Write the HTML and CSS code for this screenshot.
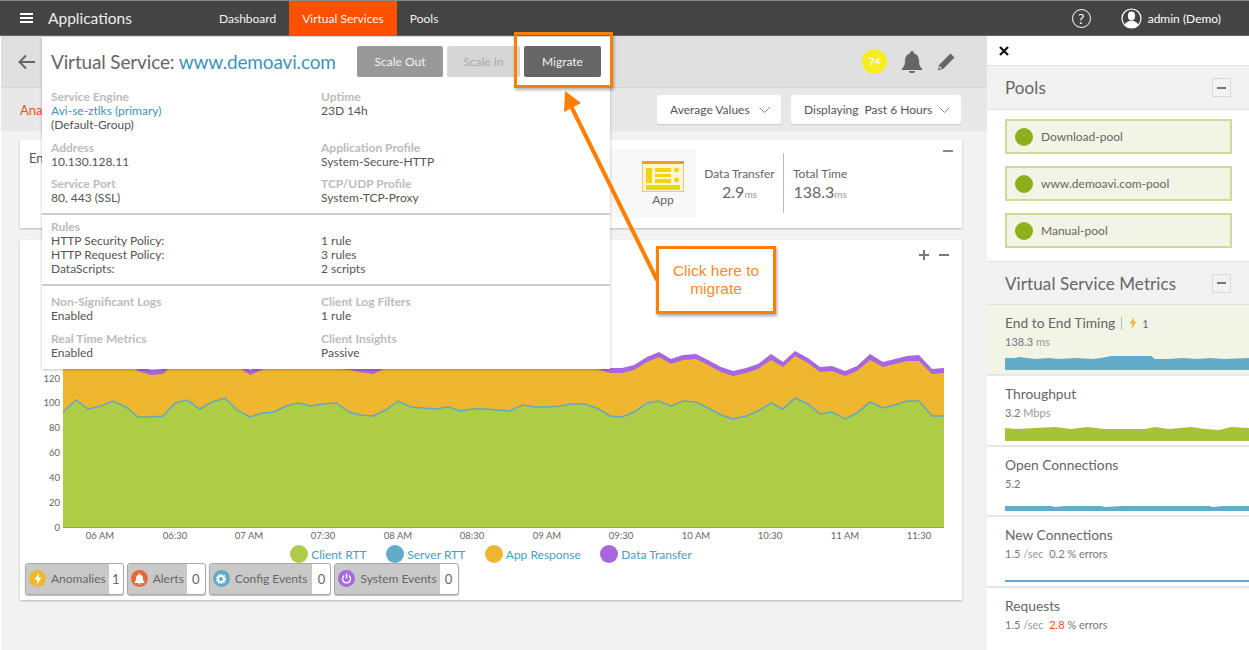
FILE: index.html
```html
<!DOCTYPE html>
<html lang="en">
<head>
    <meta charset="UTF-8">
    <title>Applications</title>
    <link rel="stylesheet" href="styles.css">
</head>
<body>
    <nav class="topbar">
        <div class="burger"><span></span><span></span><span></span></div>
        <div class="brand">Applications</div>
        <div class="tabs">
            <a class="tab">Dashboard</a>
            <a class="tab tab-active">Virtual Services</a>
            <a class="tab">Pools</a>
        </div>
        <div class="account">
            <span class="help">?</span>
            <svg class="user-icon" width="21" height="21" viewBox="0 0 21 21">
                <circle cx="10.5" cy="10.5" r="9.5" fill="none" stroke="#fff" stroke-width="1.2"/>
                <ellipse cx="10.5" cy="8" rx="3.6" ry="4.4" fill="#fff"/>
                <path d="M3.6 17c1-3 4-3.4 5-4.2h3.8c1 .8 4 1.200 5 4.200a9.500 9.500 0 0 1-13.800 0z" fill="#fff"/>
            </svg>
            <span class="user-name">admin (Demo)</span>
        </div>
    </nav>

    <div class="workspace">
        <main class="main">
            <header class="page-head">
                <svg class="back" width="18" height="16" viewBox="0 0 18 16">
                    <path d="M17 8H2M8 1.500 1.500 8 8 14.500" fill="none" stroke="#666" stroke-width="2"/>
                </svg>
                <div class="head-icons">
                    <span class="score">74</span>
                    <svg width="22" height="22" viewBox="0 0 22 22">
                        <path d="M11 0a2 2 0 0 1 2 2v.600c3.500 1 5 3.900 5 7.400 0 4 1.200 6 3 7.500v1.500H1v-1.500c1.800-1.500 3-3.500 3-7.500 0-3.500 1.500-6.400 5-7.400V2a2 2 0 0 1 2-2zM8 20h6a3 2.200 0 0 1-6 0z" fill="#666"/>
                    </svg>
                    <svg width="18" height="18" viewBox="0 0 18 18">
                        <path d="M13.500.500 17.500 4.500 6 16 .8 17.200 2 12zM2.700 13l-.8 3.100 3.100-.8z" fill="#666"/>
                    </svg>
                </div>
            </header>
            <div class="subnav">
                <span class="subnav-link">Ana</span>
                <div class="selects">
                    <div class="select select-avg">Average Values
                        <svg width="11" height="6" viewBox="0 0 11 6"><path d="M.5.500 5.500 5.500 10.500.500" fill="none" stroke="#888"/></svg>
                    </div>
                    <div class="select select-time">Displaying&nbsp; Past 6 Hours
                        <svg width="11" height="6" viewBox="0 0 11 6"><path d="M.5.500 5.500 5.500 10.500.500" fill="none" stroke="#888"/></svg>
                    </div>
                </div>
            </div>

            <div class="content">
                <section class="card summary">
                    <div class="summary-title">En</div>
                    <div class="app-tile">
                        <svg width="42" height="31" viewBox="0 0 42 31">
                            <rect x=".5" y=".5" width="41" height="30" fill="#fdf6dc" stroke="#f8c27a"/>
                            <rect width="42" height="3" fill="#f59a23"/>
                            <rect x="4" y="7" width="6" height="15" fill="#f4d40f"/>
                            <rect x="13" y="7" width="16" height="4" fill="#f4d40f"/>
                            <rect x="13" y="13" width="16" height="3" fill="#f4d40f"/>
                            <rect x="13" y="18" width="16" height="4" fill="#f4d40f"/>
                            <circle cx="34.500" cy="9" r="2.500" fill="#f4d40f"/>
                            <circle cx="34.500" cy="19" r="2.500" fill="#f4d40f"/>
                            <rect x="4" y="24" width="34" height="5" fill="#f4d40f"/>
                        </svg>
                        <span>App</span>
                    </div>
                    <div class="stat stat-transfer">
                        <span class="stat-label">Data Transfer</span>
                        <span class="stat-value">2.9<small>ms</small></span>
                    </div>
                    <div class="stat stat-total">
                        <span class="stat-label">Total Time</span>
                        <span class="stat-value">138.3<small>ms</small></span>
                    </div>
                    <span class="summary-minus"></span>
                </section>

                <section class="card chart-card">
                    <div class="chart-tools"><span class="tool-plus"></span><span class="tool-minus"></span></div>
                    <!-- page coordinates, so the numbers read off the screen directly -->
                    <svg class="chart" width="942" height="275" viewBox="20 270 942 275">
                        <polygon fill="#a866e0" points="63,355 126,355 138,366 151,370 163,369 175,357 237,361 250,370 262,365 274,357 349,365 360,367 373,369 386,363 398,357 597,364 610,368 622,368 634,365 647,357 659,352 671,359 683,355 696,354 708,360 721,367 733,371 746,368 758,364 771,354 783,362 795,351 808,358 820,367 832,366 845,371 857,366 870,354 883,362 895,359 907,356 919,355 932,369 944,368 944,527 63,527"/>
                        <polygon fill="#efb72f" points="63,360 126,360 138,371 151,375 163,374 175,362 237,366 250,375 262,370 274,362 349,370 360,372 373,374 386,368 398,362 597,369 610,373 622,373 634,370 647,362 659,357 671,364 683,360 696,359 708,365 721,372 733,376 746,373 758,369 771,360 783,367 795,356 808,363 820,372 832,371 845,376 857,371 870,360 883,367 895,364 907,361 919,361 932,374 944,373 944,527 63,527"/>
                        <polygon fill="#aecc45" points="63,412 76,400 88,409 101,406 113,401 126,407 138,417 151,417 163,416 175,403 187,400 200,409 212,402 225,398 237,410 250,417 262,413 274,412 286,406 298,403 311,406 323,404 336,403 349,412 360,415 373,416 386,410 398,401 411,407 423,408 435,409 448,407 460,411 472,409 485,409 497,410 510,411 522,405 535,407 547,407 560,406 572,404 584,404 597,408 610,416 622,417 634,412 647,403 659,401 671,406 683,401 696,402 708,408 721,415 733,419 746,416 758,411 771,403 783,409 795,398 808,404 820,414 832,412 845,419 857,413 870,402 883,408 895,405 907,401 919,401 932,416 944,416 944,527 63,527"/>
                        <polyline fill="none" stroke="#5fa9c4" stroke-width="1.500" points="63,412 76,400 88,409 101,406 113,401 126,407 138,417 151,417 163,416 175,403 187,400 200,409 212,402 225,398 237,410 250,417 262,413 274,412 286,406 298,403 311,406 323,404 336,403 349,412 360,415 373,416 386,410 398,401 411,407 423,408 435,409 448,407 460,411 472,409 485,409 497,410 510,411 522,405 535,407 547,407 560,406 572,404 584,404 597,408 610,416 622,417 634,412 647,403 659,401 671,406 683,401 696,402 708,408 721,415 733,419 746,416 758,411 771,403 783,409 795,398 808,404 820,414 832,412 845,419 857,413 870,402 883,408 895,405 907,401 919,401 932,416 944,416"/>
                        <path d="M63 527.500H944" stroke="#8fa83a" fill="none"/>
                        <g class="axis-y">
                            <text x="60" y="382">120</text><text x="60" y="406">100</text><text x="60" y="431">80</text><text x="60" y="456">60</text><text x="60" y="481">40</text><text x="60" y="506">20</text><text x="60" y="531">0</text>
                        </g>
                        <g class="axis-x">
                            <text x="100" y="539">06 AM</text><text x="175" y="539">06:30</text><text x="249" y="539">07 AM</text><text x="323" y="539">07:30</text><text x="398" y="539">08 AM</text><text x="472" y="539">08:30</text><text x="547" y="539">09 AM</text><text x="621" y="539">09:30</text><text x="696" y="539">10 AM</text><text x="770" y="539">10:30</text><text x="845" y="539">11 AM</text><text x="919" y="539">11:30</text>
                        </g>
                    </svg>
                    <div class="legend">
                        <span class="legend-item"><i class="dot dot-green"></i>Client RTT</span>
                        <span class="legend-item"><i class="dot dot-blue"></i>Server RTT</span>
                        <span class="legend-item"><i class="dot dot-orange"></i>App Response</span>
                        <span class="legend-item"><i class="dot dot-purple"></i>Data Transfer</span>
                    </div>
                    <div class="events">
                        <div class="event">
                            <div class="event-name"><i class="event-icon dot-orange"><svg width="8" height="12" viewBox="0 0 8 12"><path d="M5 0 .5 6.500h3L2.500 12 7.500 4.500h-3z" fill="#fff"/></svg></i>Anomalies</div>
                            <div class="event-count event-count-narrow">1</div>
                        </div>
                        <div class="event">
                            <div class="event-name"><i class="event-icon dot-red"><svg width="11" height="12" viewBox="0 0 22 22"><path d="M11 0a2 2 0 0 1 2 2v.600c3.500 1 5 3.900 5 7.400 0 4 1.200 6 3 7.500v1.500H1v-1.500c1.800-1.500 3-3.500 3-7.500 0-3.500 1.500-6.400 5-7.400V2a2 2 0 0 1 2-2zM8 20h6a3 2.200 0 0 1-6 0z" fill="#fff"/></svg></i>Alerts</div>
                            <div class="event-count">0</div>
                        </div>
                        <div class="event">
                            <div class="event-name event-name-wide"><i class="event-icon dot-blue"><svg width="10" height="10" viewBox="0 0 10 10"><circle cx="5" cy="5" r="3" fill="none" stroke="#fff" stroke-width="2"/><circle cx="5" cy="5" r="4.600" fill="none" stroke="#fff" stroke-width="1.200" stroke-dasharray="1.500 1.500"/></svg></i>Config Events</div>
                            <div class="event-count">0</div>
                        </div>
                        <div class="event">
                            <div class="event-name"><i class="event-icon dot-purple"><svg width="11" height="11" viewBox="0 0 11 11"><path d="M3.300 2.500a4 4 0 1 0 4.400 0M5.500.5v5" fill="none" stroke="#fff" stroke-width="1.400"/></svg></i>System Events</div>
                            <div class="event-count">0</div>
                        </div>
                    </div>
                </section>
            </div>
        </main>

        <aside class="sidebar">
            <div class="sidebar-close">
                <svg width="10" height="10" viewBox="0 0 10 10"><path d="M1 1 9 9M9 1 1 9" stroke="#111" stroke-width="2.200"/></svg>
            </div>
            <div class="panel-head">
                <h3>Pools</h3>
                <span class="collapse"></span>
            </div>
            <div class="pools">
                <div class="pool"><i class="pool-dot"></i>Download-pool</div>
                <div class="pool"><i class="pool-dot"></i>www.demoavi.com-pool</div>
                <div class="pool"><i class="pool-dot"></i>Manual-pool</div>
            </div>
            <div class="panel-head panel-metrics">
                <h3>Virtual Service Metrics</h3>
                <span class="collapse"></span>
            </div>
            <div class="metric metric-active">
                <div class="metric-name">End to End Timing <span class="metric-flag"><svg width="8" height="12" viewBox="0 0 8 12"><path d="M5 0 .5 6.500h3L2.500 12 7.500 4.500h-3z" fill="#efb72f"/></svg> 1</span></div>
                <div class="metric-value">138.3 <span class="unit">ms</span></div>
                <svg class="spark" viewBox="0 0 244 15" preserveAspectRatio="none">
                    <polygon fill="#62abc9" points="0,3 10,3 14,2 22,3 30,4 44,3 54,4 70,3 88,4 96,3 106,1 136,1 146,1 150,4 162,4 178,3 192,4 205,3 220,4 244,3 244,15 0,15"/>
                </svg>
            </div>
            <div class="metric">
                <div class="metric-name">Throughput</div>
                <div class="metric-value">3.2 <span class="unit">Mbps</span></div>
                <svg class="spark" viewBox="0 0 244 15" preserveAspectRatio="none">
                    <polygon fill="#a4c339" points="0,2 12,3 30,2 50,1 66,3 82,1 100,3 126,3 140,3 150,1 164,3 186,1 200,3 214,4 226,1 244,2 244,15 0,15"/>
                </svg>
            </div>
            <div class="metric">
                <div class="metric-name">Open Connections</div>
                <div class="metric-value">5.2</div>
                <svg class="spark" viewBox="0 0 244 15" preserveAspectRatio="none">
                    <polygon fill="#62abc9" points="0,10 46,10 50,11 60,10 96,10 100,11 118,10 204,10 208,11 218,10 244,10 244,15 0,15"/>
                </svg>
            </div>
            <div class="metric">
                <div class="metric-name">New Connections</div>
                <div class="metric-value">1.5 <span class="unit">/sec</span> &nbsp;0.2 % errors</div>
                <svg class="spark" viewBox="0 0 244 15" preserveAspectRatio="none">
                    <rect y="13" width="244" height="2" fill="#62abc9"/>
                </svg>
            </div>
            <div class="metric">
                <div class="metric-name">Requests</div>
                <div class="metric-value">1.5 <span class="unit">/sec</span> &nbsp;<span class="error">2.8</span> % errors</div>
            </div>
        </aside>
    </div>

    <!-- popover opened from the page title -->
    <div class="popover">
        <div class="popover-head">
            <div class="popover-title">Virtual Service: <a>www.demoavi.com</a></div>
            <div class="popover-actions">
                <button class="btn btn-out">Scale Out</button>
                <button class="btn btn-in">Scale In</button>
                <button class="btn btn-migrate">Migrate</button>
            </div>
        </div>
        <div class="popover-section info-grid">
            <div class="info"><b>Service Engine</b><a>Avi-se-ztlks (primary)</a><span>(Default-Group)</span></div>
            <div class="info"><b>Uptime</b><span>23D 14h</span></div>
            <div class="info"><b>Address</b><span>10.130.128.11</span></div>
            <div class="info"><b>Application Profile</b><span>System-Secure-HTTP</span></div>
            <div class="info"><b>Service Port</b><span>80, 443 (SSL)</span></div>
            <div class="info"><b>TCP/UDP Profile</b><span>System-TCP-Proxy</span></div>
        </div>
        <div class="popover-section info-grid">
            <div class="info"><b>Rules</b><span>HTTP Security Policy:</span><span>HTTP Request Policy:</span><span>DataScripts:</span></div>
            <div class="info"><b>&nbsp;</b><span>1 rule</span><span>3 rules</span><span>2 scripts</span></div>
        </div>
        <div class="popover-section info-grid">
            <div class="info"><b>Non-Significant Logs</b><span>Enabled</span></div>
            <div class="info"><b>Client Log Filters</b><span>1 rule</span></div>
            <div class="info"><b>Real Time Metrics</b><span>Enabled</span></div>
            <div class="info"><b>Client Insights</b><span>Passive</span></div>
        </div>
    </div>

    <!-- callout drawn on top of the screenshot -->
    <div class="highlight"></div>
    <svg class="callout-arrow" width="1249" height="650" viewBox="0 0 1249 650">
        <path d="M657 280 570 104" fill="none" stroke="#ff8000" stroke-width="4"/>
        <path d="M565 91 564 112 581 103z" fill="#ff8000"/>
    </svg>
    <div class="callout">Click here to migrate</div>
</body>
</html>
```

FILE: styles.css
```css
* {
    box-sizing: border-box;
}
html, body {
    height: 100%;
}
body {
    margin: 0;
    overflow: hidden;
    font-family: Lato, "Open Sans", sans-serif;
    font-size: 12px;
    color: #555;
    background: #f2f2f2;
}

/* top bar */
.topbar {
    display: flex;
    align-items: center;
    height: 36px;
    background: #444;
    border-top: 1px solid #888;
    border-bottom: 1px solid #666;
    color: #fff;
}
.burger {
    display: flex;
    flex-direction: column;
    gap: 2px;
    width: 13px;
    margin-left: 20px;
}
.burger span {
    height: 2px;
    background: #fff;
}
.brand {
    width: 158px;
    margin-left: 15px;
    font-size: 15.500px;
    color: #eee;
}
.tabs {
    display: flex;
    align-self: stretch;
}
.tab {
    display: flex;
    align-items: center;
    padding: 0 13px;
    font-size: 12px;
    color: #f2f2f2;
}
.tab-active {
    background: #ff5000;
    margin-bottom: -1px;
}
.account {
    display: flex;
    align-items: center;
    margin-left: auto;
    margin-right: 28px;
}
.help {
    width: 19px;
    height: 19px;
    border: 1px solid #fff;
    border-radius: 50%;
    margin-right: 30px;
    text-align: center;
    line-height: 17px;
    font-size: 14px;
}
.user-icon {
    margin-right: 6px;
}
.user-name {
    font-size: 12px;
}

.workspace {
    display: flex;
    height: 614px;
}
.main {
    width: 987px;
    border-left: 1px solid #fff;
}

/* page header */
.page-head {
    display: flex;
    align-items: center;
    justify-content: space-between;
    height: 52px;
    padding: 0 32px 0 17px;
    background: #e0e0e0;
    border-bottom: 1px solid #d6d6d6;
}
.head-icons {
    display: flex;
    align-items: center;
    gap: 14px;
}
.score {
    width: 25px;
    height: 25px;
    border-radius: 50%;
    background: #f3ee1c;
    color: #fff;
    font-size: 10px;
    font-weight: 700;
    line-height: 25px;
    text-align: center;
}
.subnav {
    display: flex;
    align-items: center;
    justify-content: space-between;
    height: 43px;
    padding: 0 26px 0 19px;
    background: #e8e8e8;
}
.subnav-link {
    color: #f4511e;
    font-size: 13px;
}
.selects {
    display: flex;
    gap: 10px;
}
.select {
    display: flex;
    align-items: center;
    justify-content: space-between;
    height: 29px;
    padding: 0 11px 0 13px;
    background: #fff;
    border-radius: 2px;
    box-shadow: 0 1px 1px #ccc;
    color: #555;
}
.select-avg {
    width: 124px;
}
.select-time {
    width: 170px;
}

.content {
    padding: 9px 25px 0 19px;
}
.card {
    background: #fff;
    box-shadow: 0 1px 2px rgba(0, 0, 0, 0.25);
}

/* summary card */
.summary {
    position: relative;
    display: flex;
    align-items: flex-start;
    height: 88px;
    margin-bottom: 12px;
}
.summary-title {
    width: 590px;
    padding: 10px 9px;
    font-size: 13px;
}
.app-tile {
    display: flex;
    flex-direction: column;
    align-items: center;
    width: 86px;
    height: 69px;
    margin-top: 9px;
    padding: 12px 0 0 20px;
    background: #f8f8f8;
    color: #666;
}
.stat {
    display: flex;
    flex-direction: column;
    align-items: center;
    margin-top: 13px;
    height: 60px;
    padding-top: 13px;
}
.stat-transfer {
    width: 88px;
    padding-right: 8px;
    padding-left: 8px;
    border-right: 1px solid #bbb;
}
.stat-total {
    padding-left: 9px;
}
.stat-label {
    font-size: 12px;
    color: #666;
}
.stat-value {
    font-size: 16px;
    line-height: 22px;
    color: #666;
}
.stat-value small {
    font-size: 10px;
    color: #999;
}
.summary-minus {
    position: absolute;
    top: 10px;
    right: 9px;
    width: 10px;
    height: 2px;
    background: #888;
}

/* chart card */
.chart-card {
    height: 360px;
}
.chart-tools {
    display: flex;
    align-items: center;
    justify-content: flex-end;
    gap: 10px;
    height: 30px;
    padding-right: 13px;
}
.tool-plus, .tool-minus {
    position: relative;
    width: 10px;
    height: 2px;
    background: #777;
}
.tool-plus::after {
    content: "";
    position: absolute;
    left: 4px;
    top: -4px;
    width: 2px;
    height: 10px;
    background: #777;
}
.chart {
    display: block;
}
.axis-y text, .axis-x text {
    font-family: Lato, sans-serif;
    font-size: 9.500px;
    fill: #666;
}
.axis-y text {
    text-anchor: end;
}
.axis-x text {
    text-anchor: middle;
}
.legend {
    display: flex;
    justify-content: center;
    gap: 19.500px;
    height: 18px;
    color: #4b9cbc;
}
.legend-item {
    display: flex;
    align-items: center;
    gap: 3px;
}
.dot {
    width: 18px;
    height: 18px;
    border-radius: 50%;
}
.dot-green { background: #aecc45; }
.dot-blue { background: #62abc9; }
.dot-orange { background: #efb72f; }
.dot-purple { background: #a866e0; }
.dot-red { background: #e8683a; }

.events {
    display: flex;
    gap: 3px;
    padding-left: 5px;
}
.event {
    display: flex;
    height: 32px;
    border: 1px solid #aaa;
    border-radius: 3px;
    background: #fff;
    box-shadow: 0 1px 1px #bbb;
}
.event-name {
    display: flex;
    align-items: center;
    gap: 5px;
    padding: 0 3px 1px;
    background: #c9c9c9;
    color: #666;
}
.event-name-wide {
    padding-right: 5px;
}
.event-icon {
    display: flex;
    align-items: center;
    justify-content: center;
    width: 17px;
    height: 17px;
    border-radius: 50%;
}
.event-count {
    display: flex;
    align-items: center;
    justify-content: center;
    width: 18px;
    padding-bottom: 1px;
    color: #666;
    font-size: 13px;
}
.event-count-narrow {
    width: 14px;
}

/* right sidebar */
.sidebar {
    width: 262px;
    background: #fff;
}
.sidebar-close {
    display: flex;
    align-items: center;
    height: 29px;
    padding-left: 12px;
}
.panel-head {
    display: flex;
    align-items: center;
    justify-content: space-between;
    height: 45px;
    padding: 0 18px 0 18px;
    background: #f2f2f2;
    border-top: 1px solid #e2e2e2;
    border-bottom: 1px solid #e2e2e2;
}
.panel-head h3 {
    margin: 0;
    font-size: 17px;
    font-weight: 400;
    letter-spacing: 0.1px;
    color: #666;
}
.panel-metrics {
    height: 44px;
}
.collapse {
    display: flex;
    align-items: center;
    justify-content: center;
    width: 19px;
    height: 19px;
    border: 1px solid #d8d8d8;
    background: #f2f2f2;
}
.collapse::before {
    content: "";
    width: 9px;
    height: 2px;
    background: #777;
}
.pools {
    display: flex;
    flex-direction: column;
    gap: 12px;
    padding: 9px 17px 13px 18px;
}
.pool {
    display: flex;
    align-items: center;
    gap: 8px;
    height: 35px;
    padding-left: 8px;
    background: #f2f4e6;
    border: 2px solid #cbdb9a;
    color: #666;
}
.pool-dot {
    width: 18px;
    height: 18px;
    border-radius: 50%;
    background: #8fae1b;
}
.metric {
    position: relative;
    height: 70.750px;
    padding: 9px 0 0 18px;
    border-bottom: 2px solid #e6e6e6;
}
.metric-active {
    background: #f2f4e6;
}
.metric-name {
    display: flex;
    align-items: center;
    gap: 6px;
    font-size: 13.800px;
    line-height: 18px;
    color: #666;
}
.metric-flag {
    display: flex;
    align-items: center;
    gap: 5px;
    padding-left: 7px;
    border-left: 1px solid #bbb;
    font-size: 11px;
    line-height: 13px;
}
.metric-value {
    margin-top: 2px;
    font-size: 11px;
    line-height: 15px;
    color: #777;
}
.unit {
    color: #999;
}
.error {
    color: #e8502a;
}
.spark {
    position: absolute;
    left: 18px;
    bottom: 4px;
    width: 244px;
    height: 15px;
}

/* popover */
.popover {
    position: absolute;
    left: 42px;
    top: 37px;
    width: 568px;
    height: 332px;
    background: #fff;
    box-shadow: 0 1px 3px rgba(0, 0, 0, 0.25);
}
.popover-head {
    display: flex;
    align-items: flex-start;
    justify-content: space-between;
    height: 53px;
    padding: 9px 9px 0 9px;
}
.popover-title {
    padding-top: 4px;
    font-size: 19px;
    letter-spacing: -0.150px;
    color: #666;
}
.popover-title a {
    color: #3f94b5;
}
.popover-actions {
    display: flex;
    gap: 4px;
}
.btn {
    height: 31px;
    padding: 0;
    border: none;
    border-radius: 2px;
    color: #f2f2f2;
    font-family: inherit;
    font-size: 12px;
}
.btn-out {
    width: 86px;
    background: #999;
}
.btn-in {
    width: 73px;
    background: #d6d6d6;
    color: #aaa;
}
.btn-migrate {
    width: 77px;
    background: #666;
}
.popover-section {
    padding: 0 9px 8px;
}
.popover-section + .popover-section {
    padding-top: 5px;
    border-top: 2px solid #ccc;
}
.popover-section:last-child {
    padding-top: 9px;
}
.info-grid {
    display: grid;
    grid-template-columns: 270px 270px;
    row-gap: 8.500px;
}
.info {
    display: flex;
    flex-direction: column;
    line-height: 14px;
    color: #555;
}
.info b {
    font-weight: 700;
    color: #bbb;
}
.info a {
    color: #3f94b5;
}

/* callout */
.highlight {
    position: absolute;
    left: 514px;
    top: 32px;
    width: 99px;
    height: 56px;
    border: 3px solid #ff8000;
    box-shadow: 1px 2px 3px rgba(0, 0, 0, 0.3);
}
.callout-arrow {
    position: absolute;
    left: 0;
    top: 0;
}
.callout {
    position: absolute;
    left: 656px;
    top: 246px;
    display: flex;
    align-items: center;
    justify-content: center;
    width: 120px;
    height: 68px;
    padding: 0 12px;
    background: #fff;
    border: 3px solid #ff8000;
    box-shadow: 1px 2px 3px rgba(0, 0, 0, 0.35);
    color: #f98a2d;
    font-family: "Liberation Sans", Arial, sans-serif;
    font-size: 15.500px;
    line-height: 18px;
    text-align: center;
}
```
